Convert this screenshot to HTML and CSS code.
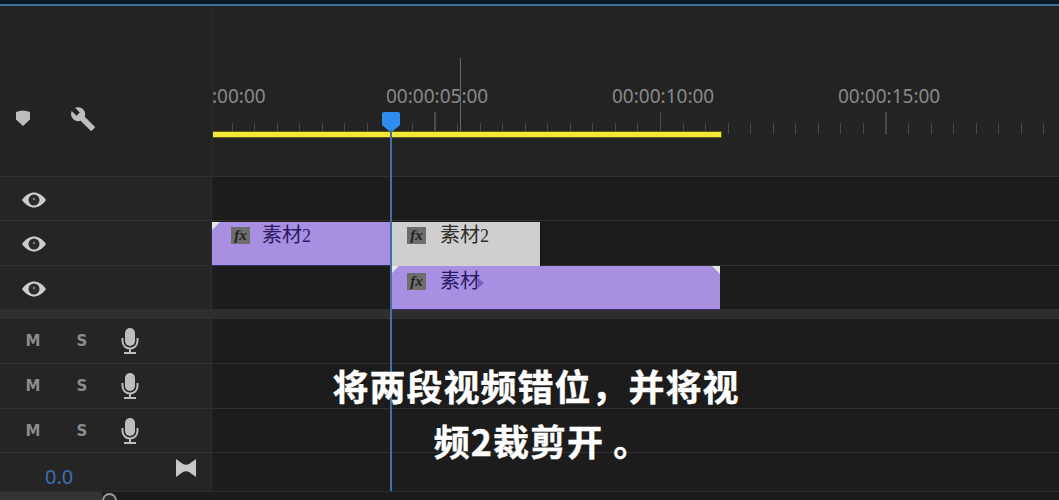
FILE: index.html
```html
<!DOCTYPE html>
<html lang="zh-CN">
<head>
  <meta charset="UTF-8" />
  <title>序列时间轴</title>
  <link rel="stylesheet" href="styles.css">
</head>
<body>
  <svg class="defs" width="0" height="0">
    <symbol id="eye" viewBox="0 0 24 16">
      <path d="M0 8C4 2.500 8 .5 12 .5S20 2.500 24 8C20 13.500 16 15.500 12 15.500S4 13.500 0 8z" fill="#cdcdcd"/>
      <circle cx="12" cy="8" r="5.500" fill="#2b2b2b"/>
      <circle cx="12" cy="7" r="1.300" fill="#777"/>
    </symbol>
    <symbol id="mic" viewBox="0 0 18 26">
      <rect x="4" y="0" width="10" height="18" rx="5" fill="#bdbdbd"/>
      <path d="M1.500 10V13C1.500 17.500 5 20.500 9 20.500S16.500 17.500 16.500 13V10" fill="none" stroke="#bdbdbd" stroke-width="2"/>
      <path d="M9 20V24M3 25H15" fill="none" stroke="#bdbdbd" stroke-width="2"/>
    </symbol>
  </svg>

  <div class="app">
    <div class="top-strip"></div>

    <header class="head">
      <div class="tools">
        <svg class="marker-icon" viewBox="0 0 14 16"><path d="M0 2Q7-1 14 2V9.500L7 16 0 9.500z" fill="#bdbdbd"/></svg>
        <svg class="wrench-icon" viewBox="0 0 24 24"><path d="M22.700 19l-9.100-9.100c.9-2.300.4-5-1.500-6.900-2-2-5-2.400-7.400-1.300L9 6 6 9 1.600 4.700C.4 7.100.9 10.100 2.900 12.100c1.900 1.900 4.600 2.400 6.900 1.500l9.100 9.100c.4.400 1 .4 1.400 0l2.300-2.300c.5-.4.5-1.100.1-1.400z" fill="#bdbdbd"/></svg>
      </div>
      <div class="ruler">
        <span class="time t0">:00:00</span>
        <span class="time t5">00:00:05:00</span>
        <span class="time t10">00:00:10:00</span>
        <span class="time t15">00:00:15:00</span>
        <div class="ruler-mark"></div>
        <div class="ticks"></div>
        <div class="work-area"></div>
      </div>
    </header>

    <section class="row video">
      <div class="row-head"><svg class="eye"><use href="#eye"/></svg></div>
      <div class="row-body"></div>
    </section>
    <section class="row video tall">
      <div class="row-head"><svg class="eye"><use href="#eye"/></svg></div>
      <div class="row-body">
        <div class="clip purple clip-a corner-left"><span class="fx">fx</span><span class="clip-name">素材<small>2</small></span></div>
        <div class="clip grey clip-b"><span class="fx">fx</span><span class="clip-name">素材<small>2</small></span></div>
      </div>
    </section>
    <section class="row video">
      <div class="row-head"><svg class="eye"><use href="#eye"/></svg></div>
      <div class="row-body">
        <div class="clip purple clip-c corner-left corner-right"><span class="fx">fx</span><span class="clip-name">素材<i class="more"></i></span></div>
      </div>
    </section>

    <div class="divider"></div>

    <section class="row audio">
      <div class="row-head"><span class="btn">M</span><span class="btn">S</span><svg class="mic"><use href="#mic"/></svg></div>
      <div class="row-body"></div>
    </section>
    <section class="row audio">
      <div class="row-head"><span class="btn">M</span><span class="btn">S</span><svg class="mic"><use href="#mic"/></svg></div>
      <div class="row-body"></div>
    </section>
    <section class="row audio short">
      <div class="row-head"><span class="btn">M</span><span class="btn">S</span><svg class="mic"><use href="#mic"/></svg></div>
      <div class="row-body"></div>
    </section>
    <section class="row master">
      <div class="row-head">
        <span class="level">0.0</span>
        <svg class="bow-icon" viewBox="0 0 20 18"><path d="M0 0L7 5Q10 6.500 13 5L20 0V18L13 13Q10 11.500 7 13L0 18z" fill="#c8c8c8"/></svg>
      </div>
      <div class="row-body"></div>
    </section>

    <footer class="scroll">
      <div class="scroll-fill"></div>
      <div class="scroll-knob"></div>
    </footer>

    <div class="playhead">
      <svg class="playhead-top" viewBox="0 0 20 20"><path d="M3 0H17A2 2 0 0 1 19 2V13L12 19H8L1 13V2A2 2 0 0 1 3 0z" fill="#2f8df0"/></svg>
      <div class="playhead-line"></div>
    </div>

    <p class="subtitle">将两段视频错位，并将视<span class="second-line">频2裁剪开 。</span></p>
  </div>
</body>
</html>
```

FILE: styles.css
```css
* {
  margin: 0;
  padding: 0;
  box-sizing: border-box;
}

html, body {
  width: 1059px;
  height: 500px;
  overflow: hidden;
  background: #232323;
  font-family: "Noto Sans", "Noto Sans CJK SC", sans-serif;
}

.defs {
  position: absolute;
}

.app {
  position: relative;
  display: flex;
  flex-direction: column;
  height: 500px;
}

.top-strip {
  height: 6px;
  background: #0b1822;
  border-bottom: 2px solid #3f6f9c;
}

.head {
  display: grid;
  grid-template-columns: 212px 1fr;
  height: 170px;
  background: #232323;
}

.tools {
  display: flex;
  align-items: flex-start;
  padding: 100px 0 0 16px;
}

.marker-icon {
  width: 14px;
  height: 16px;
  margin-top: 4px;
}

.wrench-icon {
  width: 26px;
  height: 26px;
  margin-left: 40px;
}

.ruler {
  position: relative;
  overflow: hidden;
  border-left: 1px solid #2d2d2d;
}

.time {
  position: absolute;
  top: 76px;
  font-size: 19px;
  line-height: 28px;
  color: #888;
  white-space: nowrap;
}

.t0 { left: -1px; }
.t5 { left: 173px; }
.t10 { left: 399px; }
.t15 { left: 625px; }

.ruler-mark {
  position: absolute;
  left: 247px;
  top: 52px;
  width: 1px;
  height: 74px;
  background: #666;
}

.ticks {
  position: absolute;
  left: 0;
  right: 0;
  top: 106px;
  height: 22px;
  background-image:
    repeating-linear-gradient(to right, #4c4c4c 0 1px, transparent 1px 225.500px),
    repeating-linear-gradient(to right, #474747 0 1px, transparent 1px 22.550px);
  background-size: 100% 100%, 100% 11px;
  background-position: -4px 0, -4px 11px;
  background-repeat: no-repeat;
}

.work-area {
  position: absolute;
  left: -1px;
  top: 126px;
  width: 509px;
  height: 5px;
  background: #f3e93a;
  box-shadow: 0 0 0 1px #5c5818;
}

.row {
  display: grid;
  grid-template-columns: 212px 1fr;
  height: 44px;
  border-top: 1px solid #303030;
}

.row.tall {
  height: 45px;
}

.row.audio {
  height: 45px;
}

.row.audio.short {
  height: 44px;
}

.row.master {
  height: 39px;
}

.row-head {
  display: flex;
  align-items: center;
  background: #252525;
  border-right: 1px solid #2f2f2f;
}

.row-body {
  position: relative;
  background: #1c1c1c;
}

.eye {
  width: 24px;
  height: 16px;
  margin: 2px 0 0 22px;
}

.divider {
  height: 9px;
  background: #2e2e2e;
}

.btn {
  width: 20px;
  margin-left: 23px;
  text-align: center;
  font-family: "DejaVu Sans", sans-serif;
  font-size: 15px;
  font-weight: 700;
  color: #8c8c8c;
}

.btn + .btn {
  margin-left: 29px;
}

.mic {
  width: 18px;
  height: 26px;
  margin-left: 29px;
}

.level {
  margin: 8px 0 0 45px;
  font-size: 20px;
  color: #3a70b0;
}

.bow-icon {
  width: 20px;
  height: 18px;
  margin: -8px 0 0 103px;
}

.scroll {
  display: flex;
  flex: 1;
  overflow: hidden;
  background: #1b1b1b;
  border-top: 1px solid #2b2b2b;
}

.scroll-fill {
  width: 102px;
  background: #343434;
}

.scroll-knob {
  flex: none;
  width: 15px;
  height: 15px;
  margin-top: 1px;
  border: 2px solid #9a9a9a;
  border-radius: 50%;
  background: #2a2a2a;
}

/* clips sit on the track by their time, so they are placed inside row-body */
.clip {
  position: absolute;
  top: 1px;
  bottom: -1px;
  display: flex;
  align-items: flex-start;
  padding: 4px 0 0 19px;
}

.clip.purple {
  background: #a78fe2;
  color: #2a1b63;
  border-bottom: 1px solid #3a2d6a;
}

.clip.grey {
  background: #cfcfcf;
  color: #2e2e2e;
  box-shadow: 1px 0 0 #111;
}

.clip-a {
  left: 0;
  width: 178px;
}

.clip-b {
  left: 179px;
  width: 149px;
  padding-left: 16px;
}

.clip-b .clip-name {
  margin-left: 14px;
}

.clip-c {
  left: 179px;
  top: 0;
  width: 329px;
  padding: 6px 0 0 16px;
}

.clip-c .clip-name {
  margin-left: 14px;
}

.corner-left::before,
.corner-right::after {
  content: "";
  position: absolute;
  top: 0;
  width: 8px;
  height: 8px;
}

.corner-left::before {
  left: 0;
  background: linear-gradient(135deg, #e6e6e6 62%, #3a2d6a 62%);
  clip-path: polygon(0 0, 100% 0, 0 100%);
}

.corner-right::after {
  right: 0;
  background: linear-gradient(225deg, #e6e6e6 62%, #3a2d6a 62%);
  clip-path: polygon(0 0, 100% 0, 100% 100%);
}

.fx {
  flex: none;
  width: 19px;
  height: 17px;
  margin-top: 1px;
  background: #6e6e6e;
  color: #222;
  font-family: "Liberation Serif", serif;
  font-style: italic;
  font-size: 15px;
  font-weight: 700;
  line-height: 17px;
  text-align: center;
}

.clip-name {
  margin: -5px 0 0 12px;
  font-family: "Noto Sans CJK SC", sans-serif;
  font-size: 20px;
  line-height: 26px;
  white-space: nowrap;
}

.clip-name small {
  font-family: "Liberation Serif", serif;
  font-size: 18px;
}

.more {
  display: inline-block;
  width: 0;
  height: 0;
  margin-left: -2px;
  border-left: 6px solid #7a62b8;
  border-top: 5px solid transparent;
  border-bottom: 5px solid transparent;
}

.playhead {
  position: absolute;
  left: 381px;
  top: 112px;
  width: 20px;
  height: 379px;
  display: flex;
  flex-direction: column;
  align-items: center;
}

.playhead-top {
  flex: none;
  width: 20px;
  height: 20px;
}

.playhead-line {
  flex: 1;
  width: 2px;
  margin-top: -2px;
  background: #44709f;
}

.subtitle {
  position: absolute;
  left: 316px;
  top: 358px;
  width: 440px;
  font-family: "Noto Sans CJK SC", sans-serif;
  font-size: 36px;
  font-weight: 700;
  line-height: 55px;
  letter-spacing: 1px;
  color: #fff;
  -webkit-text-stroke: 0.4px #fff;
  text-align: center;
  white-space: pre-wrap;
}

.second-line {
  display: block;
  padding-left: 12px;
}
```
